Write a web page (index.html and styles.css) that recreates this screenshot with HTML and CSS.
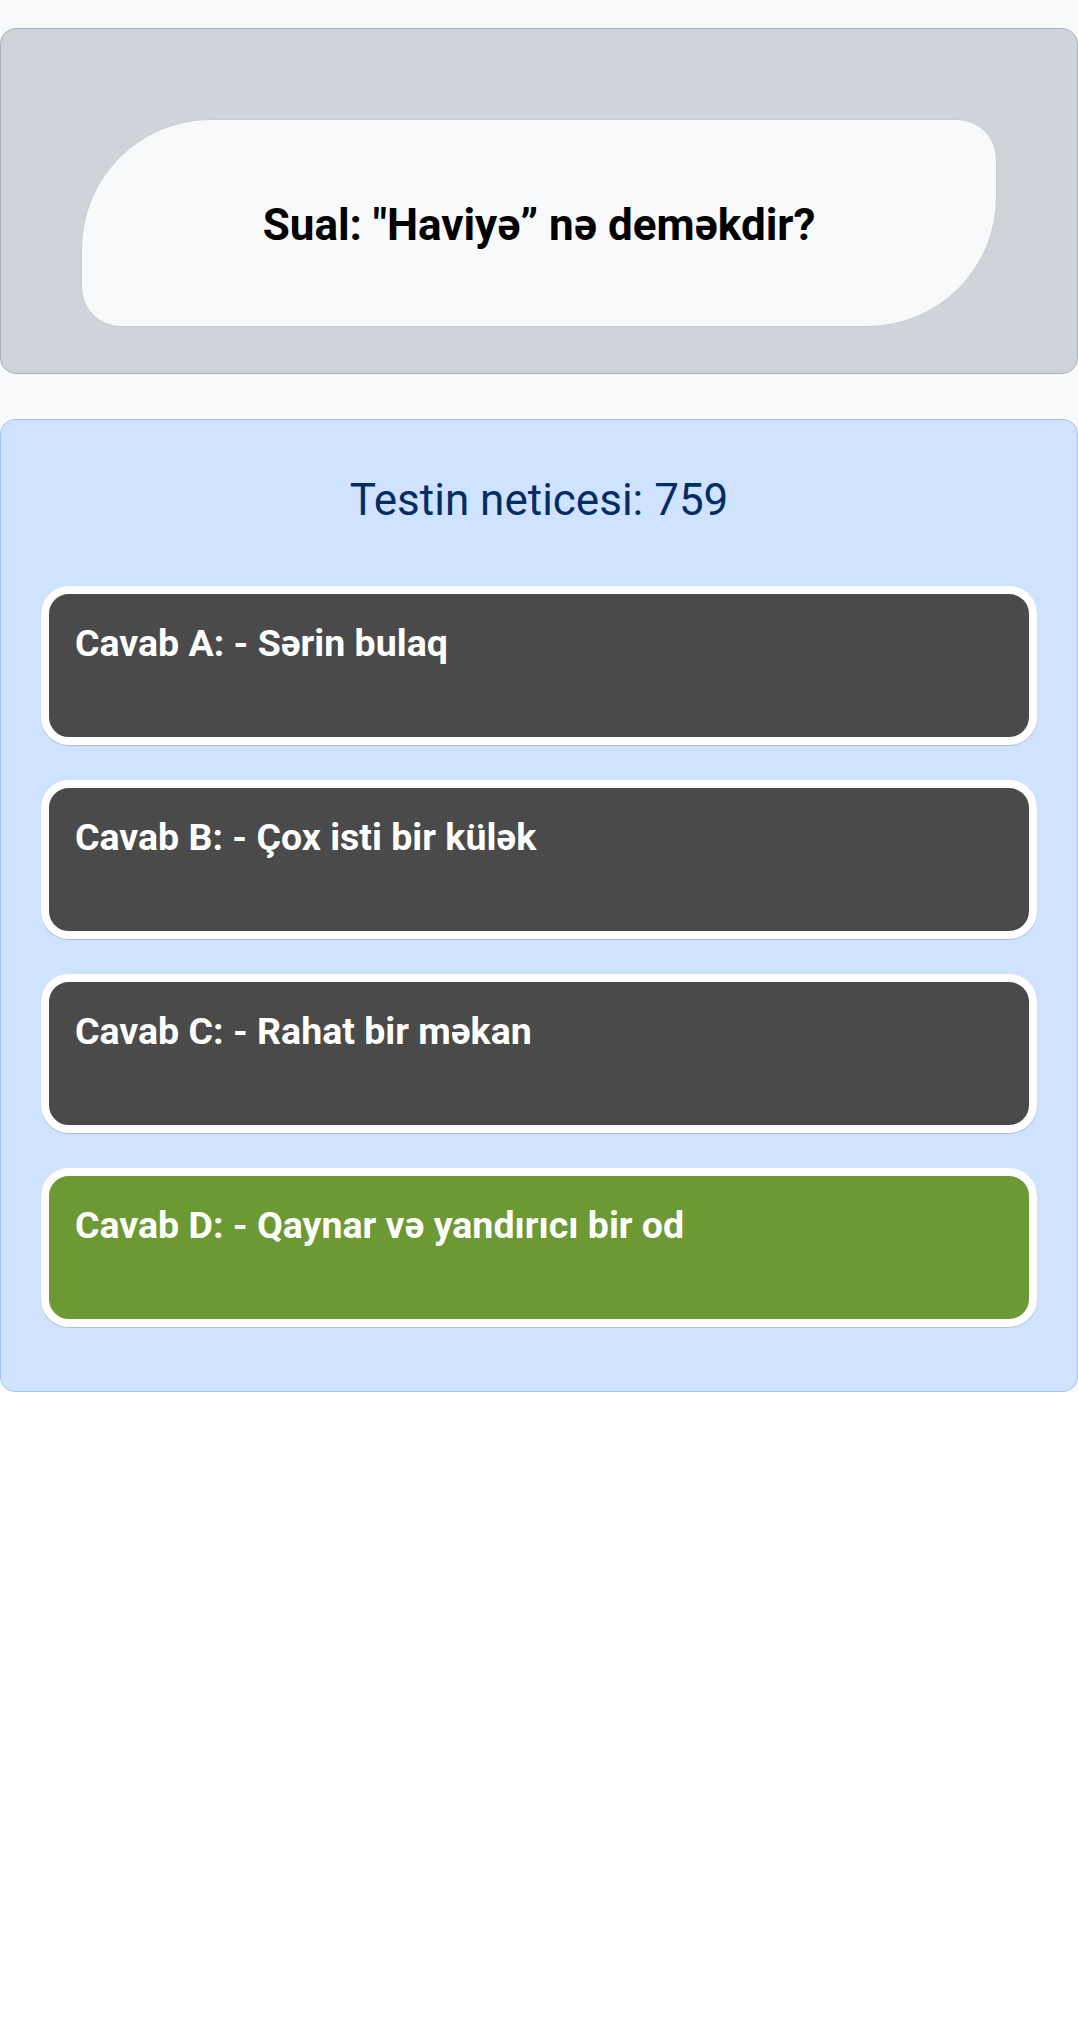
FILE: index.html
```html
<!DOCTYPE html>
<html lang="az">
<head>
<meta charset="utf-8">
<title>Test</title>
<link rel="stylesheet" href="styles.css">
</head>
<body>
<div class="page">
  <section class="question-card">
    <div class="bubble">
      <h2 class="question">Sual: "Haviyə” nə deməkdir?</h2>
    </div>
  </section>
  <section class="result-card">
    <h3 class="result">Testin neticesi: 759</h3>
    <div class="answers">
      <div class="answer">Cavab A: - Sərin bulaq</div>
      <div class="answer">Cavab B: - Çox isti bir külək</div>
      <div class="answer">Cavab C: - Rahat bir məkan</div>
      <div class="answer correct">Cavab D: - Qaynar və yandırıcı bir od</div>
    </div>
  </section>
</div>
</body>
</html>
```
FILE: styles.css
```css
* { box-sizing: border-box; }
html, body {
  margin: 0;
  padding: 0;
  background: #ffffff;
  font-family: Roboto, "Noto Sans", "Liberation Sans", sans-serif;
}
.page {
  background: #f8f9fa;
  padding-top: 28px;
}
.question-card {
  background: #ced4da;
  border: 1px solid #a9b1ba;
  border-radius: 16px;
  padding: 90px 80px 46px 80px;
}
.bubble {
  height: 208px;
  background: #f8f9fa;
  border: 1px solid #c9cdd2;
  border-radius: 130px 40px 130px 40px;
  display: flex;
  align-items: center;
  justify-content: center;
}
.question {
  margin: 0;
  font-size: 44px;
  font-weight: 700;
  line-height: 1.2;
  color: #000;
  text-align: center;
  padding-top: 4px;
}
.result-card {
  margin-top: 45px;
  background: #cfe2ff;
  border: 1px solid #9ec5fe;
  border-radius: 15px;
  padding: 54px 40px 64px 40px;
}
.result {
  margin: 0 0 59px 0;
  font-size: 44px;
  font-weight: 400;
  line-height: 1.2;
  color: #052c65;
  text-align: center;
}
.answers {
  display: flex;
  flex-direction: column;
  gap: 35px;
}
.answer {
  height: 159px;
  background: #4a4a4a;
  border: 8px solid #ffffff;
  border-radius: 28px;
  box-shadow: 0 1px 1px rgba(0, 0, 0, 0.18);
  padding: 27px 26px;
  color: #ffffff;
  font-size: 37.5px;
  font-weight: 700;
  line-height: 1.2;
}
.answer.correct {
  background: #6c9934;
}
```
